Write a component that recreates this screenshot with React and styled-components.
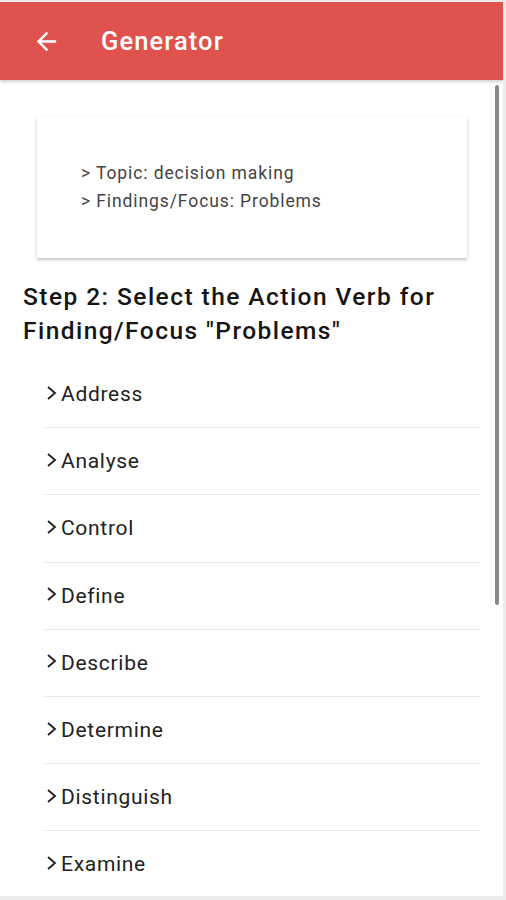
import React from 'react';
import styled, { createGlobalStyle } from 'styled-components';

const GlobalStyle = createGlobalStyle`
  html, body {
    margin: 0;
    padding: 0;
    background: #ececec;
    font-family: Roboto, "Liberation Sans", sans-serif;
  }
`;

const verbs = [
  'Address',
  'Analyse',
  'Control',
  'Define',
  'Describe',
  'Determine',
  'Distinguish',
  'Examine',
];

const Screen = styled.div`
  width: 503px;
  height: 894px;
  margin-top: 2px;
  background: #fff;
  display: flex;
  flex-direction: column;
  overflow: hidden;
  position: relative;
`;

const AppBar = styled.header`
  height: 78px;
  flex: none;
  background: #e0524e;
  display: flex;
  align-items: center;
  padding-left: 31px;
  box-shadow: 0 2px 3px rgba(0, 0, 0, 0.18);
  z-index: 1;
`;

const BackButton = styled.button`
  width: 30px;
  height: 30px;
  padding: 0;
  border: 0;
  background: none;
  display: flex;
  align-items: center;
  justify-content: center;
`;

const Title = styled.h1`
  margin: 0 0 0 40px;
  color: #fff;
  font-size: 25.5px;
  font-weight: 500;
  letter-spacing: 1.1px;
`;

const Content = styled.main`
  flex: 1;
  padding: 36px 0 0 0;
`;

const Scrollbar = styled.div`
  position: absolute;
  right: 4px;
  top: 83px;
  width: 4px;
  height: 520px;
  border-radius: 2px;
  background: #8a8a8a;
`;

const SummaryCard = styled.section`
  margin: 0 36px 0 37px;
  height: 142px;
  background: #fff;
  box-shadow: 0 2px 3px rgba(0, 0, 0, 0.22), 0 0 2px rgba(0, 0, 0, 0.06);
  padding: 43px 0 0 44px;
  box-sizing: border-box;
  color: #444;
  font-size: 17.5px;
  letter-spacing: 0.9px;
  line-height: 28px;
`;

const Heading = styled.h2`
  margin: 22px 20px 0 23px;
  font-size: 24.5px;
  font-weight: 500;
  letter-spacing: 1.45px;
  line-height: 34px;
  color: #151515;
`;

const VerbList = styled.ul`
  list-style: none;
  margin: 13px 23px 0 45px;
  padding: 0;
`;

const VerbRow = styled.li`
  height: 67.2px;
  display: flex;
  align-items: center;
  gap: 3px;
  font-size: 21px;
  letter-spacing: 0.7px;
  color: #222;
  border-bottom: 1px solid #e6e6e6;
  box-sizing: border-box;
  padding-bottom: 0;
`;

const ChevronMark = styled.svg`
  margin-top: -3px;
  flex: none;
`;

const Chevron = () => (
  <ChevronMark width="13" height="16" viewBox="0 0 13 16" fill="none">
    <path d="M3 2 L10 8 L3 14" stroke="#222" strokeWidth="1.9" />
  </ChevronMark>
);

const BackArrow = () => (
  <svg width="29" height="29" viewBox="0 0 24 24" fill="#fff">
    <path d="M20 11H7.83l5.59-5.59L12 4l-8 8 8 8 1.41-1.41L7.83 13H20v-2z" />
  </svg>
);

export default function App() {
  return (
    <>
      <GlobalStyle />
      <Screen>
        <AppBar>
          <BackButton aria-label="Back">
            <BackArrow />
          </BackButton>
          <Title>Generator</Title>
        </AppBar>
        <Content>
          <SummaryCard>
            <div>&gt; Topic: decision making</div>
            <div>&gt; Findings/Focus: Problems</div>
          </SummaryCard>
          <Heading>Step 2: Select the Action Verb for Finding/Focus "Problems"</Heading>
          <VerbList>
            {verbs.map((verb) => (
              <VerbRow key={verb}>
                <Chevron />
                {verb}
              </VerbRow>
            ))}
          </VerbList>
        </Content>
        <Scrollbar />
      </Screen>
    </>
  );
}
